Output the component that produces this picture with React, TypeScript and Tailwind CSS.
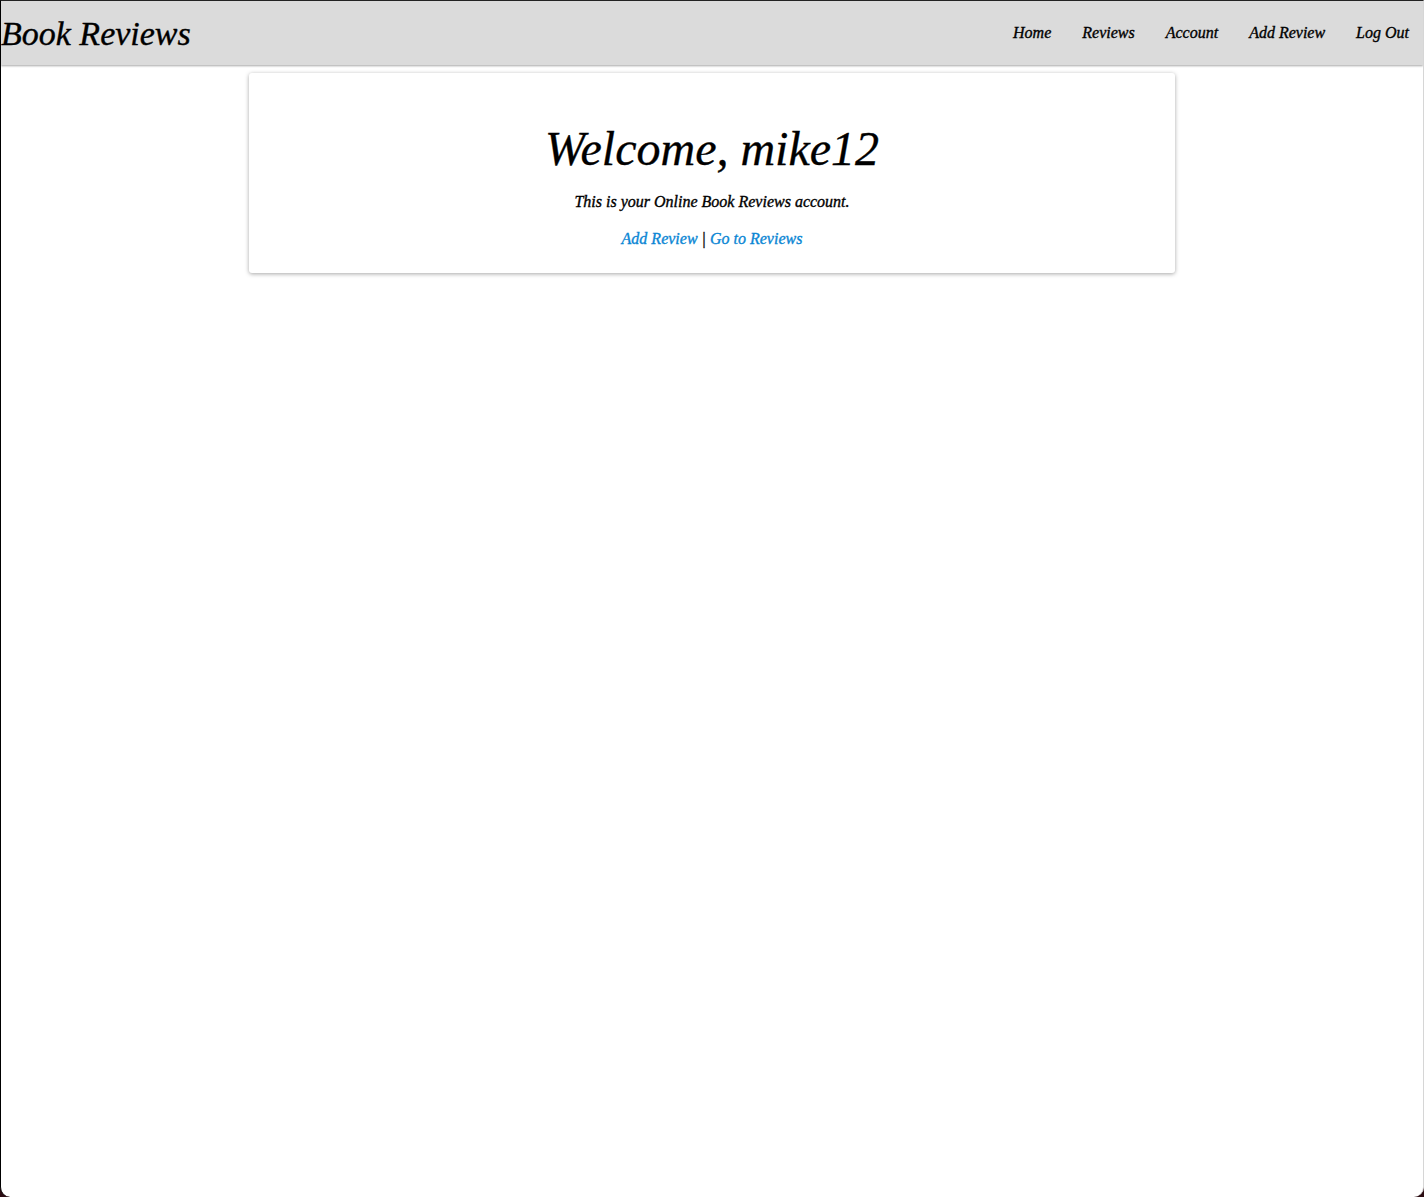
export default function App() {
  const links = ['Home', 'Reviews', 'Account', 'Add Review', 'Log Out'];
  return (
    <div className="h-[1197px] w-[1424px] bg-[#2b0c12]">
      <div
        className="flex h-full flex-col overflow-hidden rounded-b-[10px] border-l border-t border-r border-l-black border-t-[#222] border-r-[#d6d6d6] bg-white italic text-black [-webkit-text-stroke:0.35px_black]"
        style={{ fontFamily: '"Liberation Serif", serif' }}
      >
        <header className="flex h-[64px] items-center justify-between bg-[#dbdbdb] shadow-[0_1px_2px_rgba(0,0,0,0.35)]">
          <h1 className="pt-[2px] text-[34px] leading-none">Book Reviews</h1>
          <nav className="flex gap-[31px] pr-[14px] text-[16px]">
            {links.map((l) => (
              <a key={l} href="#">
                {l}
              </a>
            ))}
          </nav>
        </header>
        <main className="flex justify-center pt-[8px]">
          <div className="flex w-[926px] flex-col items-center rounded-[3px] bg-white pb-[22px] pt-[52px] shadow-[0_1px_4px_rgba(0,0,0,0.35)]">
            <h2 className="text-[48px] leading-none">Welcome, mike12</h2>
            <p className="mt-[17px] text-[16px]">This is your Online Book Reviews account.</p>
            <p className="mt-[13px] text-[16px]">
              <a href="#" className="text-[#0a86d4] [-webkit-text-stroke:0.35px_#0a86d4]">Add Review</a> |{' '}
              <a href="#" className="text-[#0a86d4] [-webkit-text-stroke:0.35px_#0a86d4]">Go to Reviews</a>
            </p>
          </div>
        </main>
      </div>
    </div>
  );
}
